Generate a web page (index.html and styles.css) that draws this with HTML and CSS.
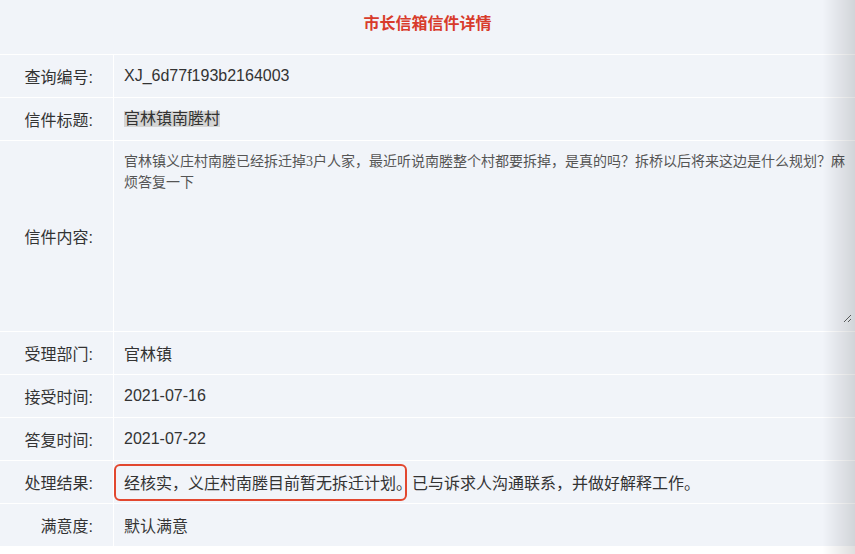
FILE: index.html
```html
<!DOCTYPE html>
<html lang="zh-CN">
<head>
<meta charset="utf-8">
<title>市长信箱信件详情</title>
<link rel="stylesheet" href="styles.css">
</head>
<body>
<div class="page">
  <div class="header"><h1 class="title">市长信箱信件详情</h1></div>
  <div class="row">
    <div class="label">查询编号:</div>
    <div class="value">XJ_6d77f193b2164003</div>
  </div>
  <div class="row">
    <div class="label">信件标题:</div>
    <div class="value"><span class="selected">官林镇南塍村</span></div>
  </div>
  <div class="row row-tall">
    <div class="label">信件内容:</div>
    <div class="value value-area"><textarea class="content" readonly>官林镇义庄村南塍已经拆迁掉3户人家，最近听说南塍整个村都要拆掉，是真的吗？拆桥以后将来这边是什么规划？麻烦答复一下</textarea></div>
  </div>
  <div class="row">
    <div class="label">受理部门:</div>
    <div class="value">官林镇</div>
  </div>
  <div class="row">
    <div class="label">接受时间:</div>
    <div class="value">2021-07-16</div>
  </div>
  <div class="row">
    <div class="label">答复时间:</div>
    <div class="value">2021-07-22</div>
  </div>
  <div class="row">
    <div class="label">处理结果:</div>
    <div class="value value-mark">经核实，义庄村南塍目前暂无拆迁计划。已与诉求人沟通联系，并做好解释工作。<span class="mark"></span></div>
  </div>
  <div class="row">
    <div class="label">满意度:</div>
    <div class="value">默认满意</div>
  </div>
</div>
<div class="edge-shadow"></div>
</body>
</html>
```

FILE: styles.css
```css
html, body {
  margin: 0;
  padding: 0;
  background: #ffffff;
}

body {
  font-family: "Liberation Sans", "Noto Sans CJK SC", sans-serif;
  font-size: 16px;
  color: #333333;
  overflow: hidden;
}

.page {
  background: #f1f4f9;
}

.header {
  height: 54px;
  box-sizing: border-box;
  padding-top: 14px;
}

.title {
  margin: 0;
  text-align: center;
  font-size: 16px;
  line-height: 20px;
  font-weight: bold;
  color: #d83b2b;
}

.row {
  display: grid;
  grid-template-columns: 114px 1fr;
  height: 43px;
  box-sizing: border-box;
  border-top: 1px solid #ffffff;
}

.row-tall {
  height: 191px;
}

.label {
  display: flex;
  align-items: center;
  justify-content: flex-end;
  padding-right: 20px;
  border-right: 1px solid #ffffff;
  white-space: nowrap;
}

.value {
  display: flex;
  align-items: center;
  padding-left: 10px;
  white-space: nowrap;
  position: relative;
}

.selected {
  display: inline-block;
  height: 16px;
  line-height: 16px;
  background: #d5d5d5;
}

.value-area {
  padding: 2px 3px 0 2px;
  align-items: flex-start;
}

.content {
  width: 100%;
  height: 180px;
  box-sizing: border-box;
  margin: 0;
  padding: 8px 4px 8px 8px;
  border: none;
  outline: none;
  background: transparent;
  resize: both;
  font-family: "Liberation Serif", "Noto Sans CJK SC", serif;
  font-size: 14px;
  line-height: 21px;
  color: #555555;
  white-space: pre-wrap;
  overflow: hidden;
}

.mark {
  position: absolute;
  left: 0;
  top: 3px;
  width: 293px;
  height: 37px;
  box-sizing: border-box;
  border: 2px solid #e2472f;
  border-radius: 6px;
}

.edge-shadow {
  position: fixed;
  top: 0;
  right: 0;
  width: 32px;
  height: 100%;
  background: linear-gradient(to right, rgba(0, 0, 0, 0), rgba(0, 0, 0, 0.13));
  pointer-events: none;
}
```
